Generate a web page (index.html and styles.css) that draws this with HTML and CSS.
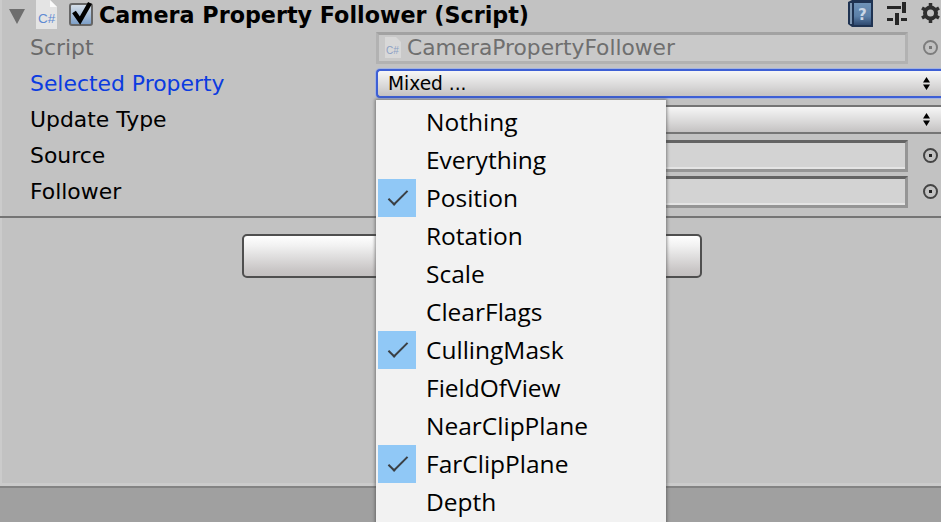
FILE: index.html
```html
<!DOCTYPE html>
<html lang="en">

<head>
    <meta charset="UTF-8">
    <title>Camera Property Follower</title>
    <link rel="stylesheet" href="styles.css">
</head>

<body>
    <div class="inspector">
        <div class="header">
            <svg class="foldout" width="16" height="15" viewBox="0 0 16 15"><path d="M0 0H16L8 15Z" fill="#6e6e6e"/></svg>
            <svg class="file-icon" width="21" height="29" viewBox="0 0 21 29">
                <path d="M0 0H14L21 7V29H0Z" fill="#e4e4e4"/>
                <path d="M14 0L21 7H14Z" fill="#fafafa"/>
                <text x="2" y="23" class="file-text">C#</text>
            </svg>
            <span class="toggle">
                <svg class="toggle-check" width="20" height="19" viewBox="0 0 20 19"><path d="M3 7L9 15.500L19 -2" fill="none" stroke="#000" stroke-width="4.500"/></svg>
            </span>
            <span class="title">Camera Property Follower (Script)</span>
            <span class="header-icons">
                <svg class="help-icon" width="26" height="28" viewBox="0 0 26 28">
                    <defs>
                        <linearGradient id="book" x1="0" y1="0" x2="0" y2="1">
                            <stop offset="0" stop-color="#6f93b8"/>
                            <stop offset="0.6" stop-color="#5b7fa8"/>
                            <stop offset="1" stop-color="#2f4a70"/>
                        </linearGradient>
                    </defs>
                    <path d="M0 2L4 0H25V27H4L0 24Z" fill="#1f3352"/>
                    <path d="M6 3H23V25H6Z" fill="url(#book)"/>
                    <path d="M2 3H4V24H2Z" fill="#7f98b4"/>
                    <text x="10" y="20" class="help-text">?</text>
                </svg>
                <svg class="sliders-icon" width="20" height="25" viewBox="0 0 20 25">
                    <path d="M0 7.500H14M0 19.500H6M14 19.500H20" stroke="#262626" stroke-width="3"/>
                    <path d="M17 2V13M10 13V25" stroke="#262626" stroke-width="4"/>
                </svg>
                <svg class="gear-icon" width="19" height="20" viewBox="0 0 19 20">
                    <circle cx="9.500" cy="10" r="5.500" fill="none" stroke="#2f2f2f" stroke-width="4"/>
                    <path d="M9.500 0V4M9.500 16V20M1 5L4.500 7M14.500 13L18 15M1 15L4.500 13M14.500 7L18 5" stroke="#2f2f2f" stroke-width="3.500"/>
                </svg>
            </span>
        </div>

        <div class="row row-disabled">
            <label class="row-label">Script</label>
            <div class="field field-disabled">
                <svg class="mini-file" width="16" height="21" viewBox="0 0 16 21">
                    <path d="M0 0H11L16 5V21H0Z" fill="#d8d8d8"/>
                    <text x="1" y="17" class="mini-text">C#</text>
                </svg>
                CameraPropertyFollower
            </div>
            <span class="picker picker-disabled"></span>
        </div>
        <div class="row">
            <label class="row-label row-label-active">Selected Property</label>
            <div class="dropdown dropdown-active">
                <span class="dropdown-text">Mixed ...</span>
                <svg class="arrows" width="7" height="13" viewBox="0 0 7 13"><path d="M3.500 0L7 5.500H0ZM0 7.500H7L3.500 13Z"/></svg>
            </div>
        </div>
        <div class="row">
            <label class="row-label">Update Type</label>
            <div class="dropdown">
                <svg class="arrows" width="7" height="13" viewBox="0 0 7 13"><path d="M3.500 0L7 5.500H0ZM0 7.500H7L3.500 13Z"/></svg>
            </div>
        </div>
        <div class="row">
            <label class="row-label">Source</label>
            <div class="field"></div>
            <span class="picker"></span>
        </div>
        <div class="row">
            <label class="row-label">Follower</label>
            <div class="field"></div>
            <span class="picker"></span>
        </div>
    </div>

    <div class="divider"></div>

    <div class="actions">
        <div class="big-button"></div>
    </div>

    <div class="footer"></div>

    <ul class="menu">
        <li class="menu-item">Nothing</li>
        <li class="menu-item">Everything</li>
        <li class="menu-item checked">Position</li>
        <li class="menu-item">Rotation</li>
        <li class="menu-item">Scale</li>
        <li class="menu-item">ClearFlags</li>
        <li class="menu-item checked">CullingMask</li>
        <li class="menu-item">FieldOfView</li>
        <li class="menu-item">NearClipPlane</li>
        <li class="menu-item checked">FarClipPlane</li>
        <li class="menu-item">Depth</li>
    </ul>
</body>

</html>
```

FILE: styles.css
```css
body {
    margin: 0;
    height: 522px;
    overflow: hidden;
    display: flex;
    flex-direction: column;
    position: relative;
    background-color: #c2c2c2;
    font-family: "DejaVu Sans", sans-serif;
    color: #000;
}

.inspector {
    height: 216px;
    flex: none;
    box-sizing: border-box;
    border-left: 2px solid #cbcbcb;
}

.divider {
    height: 2px;
    flex: none;
    background-color: #747474;
}

.header {
    height: 30px;
    display: flex;
    align-items: flex-start;
    position: relative;
}

.foldout {
    margin: 9px 0 0 7px;
}

.file-icon {
    margin: 0 0 0 11px;
}

.file-text {
    font-family: "Liberation Sans", sans-serif;
    font-size: 13.500px;
    fill: #5f8ad2;
}

.toggle {
    width: 20px;
    height: 19px;
    margin: 3px 0 0 12px;
    border: 2px solid #666;
    border-radius: 3px;
    background: linear-gradient(#d5dfe9, #7ea0c9);
    display: flex;
    flex: none;
}

.toggle-check {
    overflow: visible;
}

.title {
    margin: 2px 0 0 6px;
    font-size: 22.250px;
    font-weight: bold;
    white-space: nowrap;
    line-height: 26px;
}

.header-icons {
    display: flex;
    align-items: flex-start;
    position: absolute;
    top: 0;
    right: 0;
}

.sliders-icon {
    margin: 0 0 0 13px;
}

.gear-icon {
    margin: 3px 1px 0 14px;
}

.help-text {
    font-family: "DejaVu Sans", sans-serif;
    font-size: 15px;
    font-weight: bold;
    fill: #c9d6e6;
}

.row {
    height: 36px;
    display: flex;
    align-items: center;
}

.row-label {
    width: 346px;
    padding-left: 28px;
    box-sizing: border-box;
    flex: none;
    font-size: 21.900px;
    white-space: nowrap;
    margin-top: -1px;
}

.row-label-active {
    color: #0b3be0;
}

.row-disabled .row-label {
    color: #6a6a6a;
}

.field {
    width: 532px;
    height: 32px;
    box-sizing: border-box;
    flex: none;
    margin-left: 28px;
    margin-top: -1px;
    background-color: #d3d3d3;
    border: 3px solid #959595;
    border-top-color: #636363;
    box-shadow: inset 0 -2px 0 #e4e4e4;
    display: flex;
    align-items: center;
}

.field-disabled {
    background-color: #c9c9c9;
    border: 3px solid #b2b2b2;
    border-top-color: #a2a2a2;
    box-shadow: none;
    font-size: 21.750px;
    color: #6f6f6f;
    white-space: nowrap;
    gap: 6px;
    padding-left: 6px;
}

.mini-text {
    font-family: "Liberation Sans", sans-serif;
    font-size: 10px;
    fill: #8ba0c4;
}

.picker {
    width: 15px;
    height: 15px;
    box-sizing: border-box;
    flex: none;
    margin-left: 15px;
    margin-top: -1px;
    border: 2px solid #444;
    border-radius: 50%;
    position: relative;
}

.picker::after {
    content: "";
    position: absolute;
    left: 4px;
    top: 4px;
    width: 3px;
    height: 3px;
    background-color: #222;
}

.picker-disabled {
    border-color: #7d7d7d;
}

.picker-disabled::after {
    background-color: #777;
}

.dropdown {
    flex: 1;
    height: 29px;
    box-sizing: border-box;
    margin-left: 28px;
    margin-top: -2px;
    padding: 0 11px 0 10px;
    display: flex;
    align-items: center;
    justify-content: space-between;
    background: linear-gradient(#f6f6f6, #d9d8d8 60%, #c4c2c2);
    border: 1px solid #757575;
    border-width: 2px 0 2px 2px;
    border-radius: 4px 0 0 4px;
}

.dropdown-active {
    border-color: #3d5fd5;
    box-shadow: 0 0 0 1px #a3b3e0;
}

.dropdown-text {
    font-size: 18.600px;
}

.arrows {
    margin-left: auto;
}

.actions {
    height: 268px;
    flex: none;
    padding: 16px 0 0 240px;
    box-sizing: border-box;
    border-left: 2px solid #cbcbcb;
    border-bottom: 3px solid #cbcbcb;
}

.big-button {
    width: 460px;
    height: 44px;
    box-sizing: border-box;
    border: 2px solid #4f4f4f;
    border-radius: 5px;
    background: linear-gradient(#ffffff, #f1f1f1 25%, #c9c6c6 85%, #c3c0c0);
}

.footer {
    flex: 1;
    background-color: #a0a0a0;
    border-top: 2px solid #838383;
}

.menu {
    position: absolute;
    left: 376px;
    top: 100px;
    width: 290px;
    height: 430px;
    margin: 0;
    padding: 3px 0 0 2px;
    box-sizing: border-box;
    list-style: none;
    background-color: #f2f2f2;
    box-shadow: 0 0 3px 1px rgba(60, 60, 60, 0.55);
    font-family: "Open Sans", sans-serif;
    font-size: 24.500px;
    color: #000;
}

.menu-item {
    height: 38px;
    line-height: 38px;
    padding-left: 48px;
    position: relative;
    white-space: nowrap;
}

.checked::before {
    content: "";
    position: absolute;
    left: 0;
    top: 0;
    width: 38px;
    height: 38px;
    background-color: #90c8f6;
}

.checked::after {
    content: "";
    position: absolute;
    left: 10px;
    top: 12px;
    width: 18px;
    height: 7px;
    border-left: 2.500px solid #3a3f44;
    border-bottom: 2.500px solid #3a3f44;
    transform: rotate(-45deg);
}
```
